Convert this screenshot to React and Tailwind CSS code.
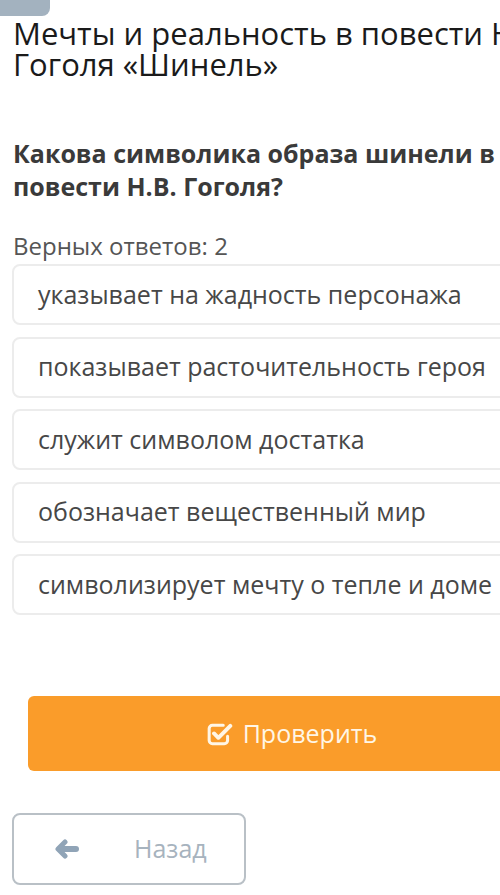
import React from 'react';

const answers = [
  'указывает на жадность персонажа',
  'показывает расточительность героя',
  'служит символом достатка',
  'обозначает вещественный мир',
  'символизирует мечту о тепле и доме',
];

// Square with a tick spilling out of the top-right corner
const CheckSquare = () => (
  <svg width="26" height="24" viewBox="0 0 24 22" fill="none" className="shrink-0">
    <path
      d="M15 3H5a3 3 0 0 0-3 3v11a3 3 0 0 0 3 3h11a3 3 0 0 0 3-3v-4"
      stroke="currentColor"
      strokeWidth="2.8"
      strokeLinecap="round"
    />
    <path
      d="M6.5 10.5l4 4L21.5 3.5"
      stroke="currentColor"
      strokeWidth="3.6"
      strokeLinecap="round"
      strokeLinejoin="round"
    />
  </svg>
);

// Chunky left arrow
const BackArrow = () => (
  <svg width="24" height="20" viewBox="0 0 24 20" fill="none" className="shrink-0">
    <path d="M10 3L3 10l7 7" stroke="currentColor" strokeWidth="5" strokeLinecap="round" strokeLinejoin="round" />
    <path d="M5 10h16" stroke="currentColor" strokeWidth="6" strokeLinecap="round" />
  </svg>
);

const App = () => {
  return (
    <div className="w-[500px] h-[895px] overflow-hidden bg-white font-['Open_Sans',sans-serif]">
      <div className="w-[580px]">
        {/* tail of the previous control */}
        <div className="w-[50px] h-4 bg-[#a3b2bf] rounded-br-lg" />

        <h1 className="pl-[13px] pr-[20px] mt-[2px] text-[31px] leading-[31px] text-[#1a1a1a]">
          Мечты и реальность в повести Н.В. Гоголя «Шинель»
        </h1>

        <h2 className="pl-[13px] w-[500px] mt-[57px] text-[25px] leading-[33px] font-bold text-[#3a3a3a]">
          Какова символика образа шинели в повести Н.В. Гоголя?
        </h2>

        <p className="pl-[13px] mt-[31px] text-[24px] leading-[24px] text-[#555]">Верных ответов: 2</p>

        <div className="mt-[6px] flex flex-col gap-[11.5px] pl-3">
          {answers.map((a) => (
            <div
              key={a}
              className="h-[61px] flex items-center pl-[24px] border-2 border-[#ececec] rounded-lg text-[25px] text-[#474747]"
            >
              {a}
            </div>
          ))}
        </div>

        <div className="mt-[81px] pl-7 pr-6">
          <button className="w-full h-[75px] flex items-center justify-center gap-[10px] bg-[#fa9c2a] rounded-md text-[#fff6e6] text-[25px]">
            <CheckSquare />
            Проверить
          </button>
        </div>

        <div className="mt-[42px] pl-3">
          <button className="w-[234px] h-[72px] flex items-center border-2 border-[#b9c0c6] rounded-lg text-[#90a4b7]">
            <span className="ml-[41px]">
              <BackArrow />
            </span>
            <span className="ml-[55px] text-[25px] text-[#a7b3be]">Назад</span>
          </button>
        </div>
      </div>
    </div>
  );
};

export default App;
